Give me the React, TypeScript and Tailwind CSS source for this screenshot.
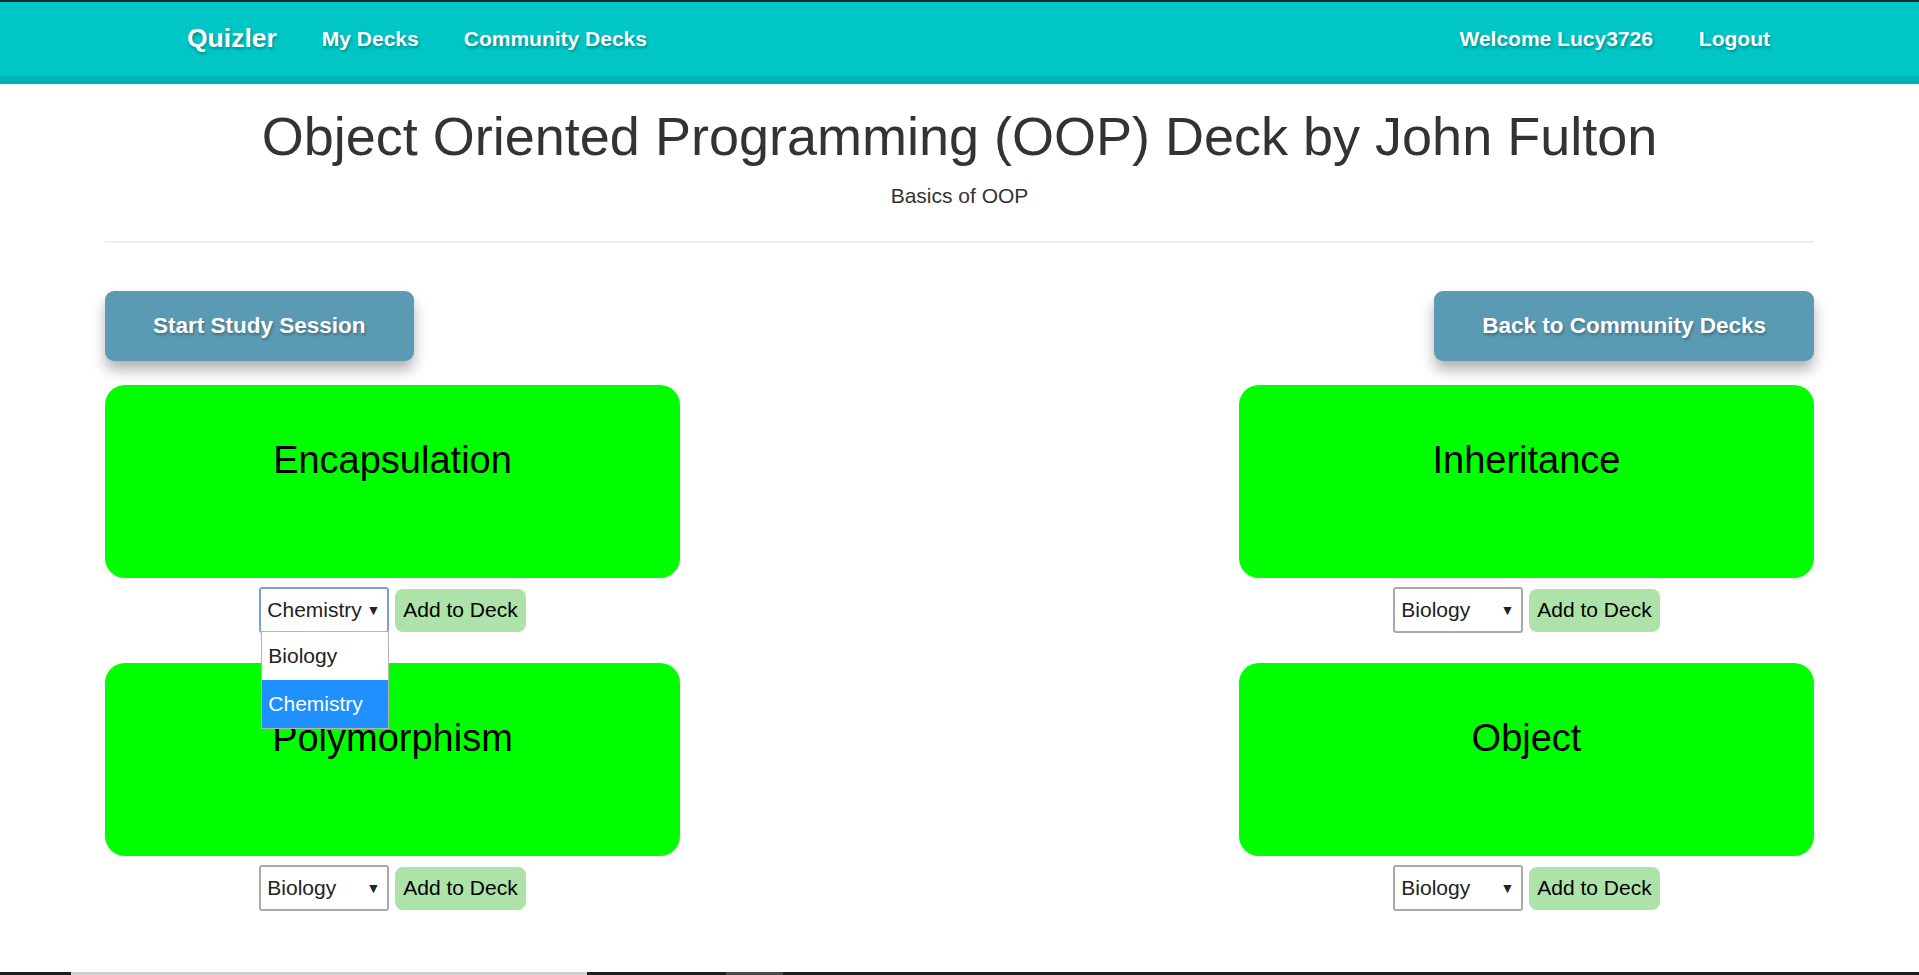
const cards = [
  { title: 'Encapsulation', deck: 'Chemistry', open: true },
  { title: 'Inheritance', deck: 'Biology', open: false },
  { title: 'Polymorphism', deck: 'Biology', open: false },
  { title: 'Object', deck: 'Biology', open: false },
];

function DeckSelect({ value, open }: { value: string; open: boolean }) {
  return (
    <div
      className={
        open
          ? 'relative flex items-center justify-between w-[130px] h-[46px] bg-white rounded-[3px] border-2 border-[#7f9fd8] pl-[6px] pr-[7px]'
          : 'relative flex items-center justify-between w-[130px] h-[46px] bg-white rounded-[3px] border-2 border-[#a9a9a9] pl-[6px] pr-[7px]'
      }
    >
      <span className="text-[21px] text-[#222]">{value}</span>
      <span className="text-[14px] text-[#222]">▼</span>
      {open && (
        <div className="absolute top-full left-0 right-[-2px] bg-white border border-[#b5b5b5] z-10">
          <div className="h-[48px] flex items-center px-[6px] text-[21px] text-[#222]">Biology</div>
          <div className="h-[48px] flex items-center px-[6px] text-[21px] text-white bg-[#1e90ff]">Chemistry</div>
        </div>
      )}
    </div>
  );
}

function Card({ title, deck, open }: { title: string; deck: string; open: boolean }) {
  return (
    <div className="w-[575px] flex flex-col items-center">
      <div className="w-full h-[193px] bg-[#00ff00] rounded-[20px] pt-[54px] text-center">
        <h2 className="text-[38px] leading-[1.15] text-black">{title}</h2>
      </div>
      <div className="flex items-center gap-[6px] mt-[9px]">
        <DeckSelect value={deck} open={open} />
        <button className="h-[43px] px-[8px] rounded-[8px] bg-[#ade3a8] text-[21px] text-black">Add to Deck</button>
      </div>
    </div>
  );
}

export default function App() {
  return (
    <div className="min-h-screen flex flex-col bg-white font-['Liberation_Sans',Arial,sans-serif]">
      <nav className="h-[84px] flex items-center justify-between bg-[#00c6c6] border-t-2 border-t-[#1c2c2e] border-b-8 border-b-[#00b4b4] pl-[187px] pr-[149px] text-white font-bold [text-shadow:1px_2px_3px_rgba(0,0,0,0.3)]">
        <div className="flex items-center gap-[45px]">
          <span className="text-[26.5px]">Quizler</span>
          <span className="text-[21px]">My Decks</span>
          <span className="text-[21px]">Community Decks</span>
        </div>
        <div className="flex items-center gap-[46px] text-[21px]">
          <span>Welcome Lucy3726</span>
          <span>Logout</span>
        </div>
      </nav>

      <div className="w-[1709px] mx-auto">
        <h1 className="mt-[21px] text-center text-[54px] leading-[1.15] text-[#333]">
          Object Oriented Programming (OOP) Deck by John Fulton
        </h1>
        <p className="mt-[17px] text-center text-[21px] leading-[1.1] text-[#333]">Basics of OOP</p>
        <hr className="mt-[34px] border-t-2 border-[#eeeeee]" />

        <div className="flex justify-between mt-[48px]">
          <button className="h-[70px] px-[48px] rounded-[9px] bg-[#5a9bb3] text-white font-bold text-[22.5px] shadow-[0_9px_14px_rgba(0,0,0,0.3)] [text-shadow:1px_2px_3px_rgba(0,0,0,0.3)]">
            Start Study Session
          </button>
          <button className="h-[70px] px-[48px] rounded-[9px] bg-[#5a9bb3] text-white font-bold text-[22.5px] shadow-[0_9px_14px_rgba(0,0,0,0.3)] [text-shadow:1px_2px_3px_rgba(0,0,0,0.3)]">
            Back to Community Decks
          </button>
        </div>

        <div className="grid grid-cols-[575px_575px] justify-between gap-y-[30px] mt-[24px]">
          {cards.map((c) => (
            <Card key={c.title} title={c.title} deck={c.deck} open={c.open} />
          ))}
        </div>
      </div>

      <div className="mt-auto h-[3px] flex">
        <div className="w-[71px] bg-[#1e1e1e]" />
        <div className="w-[516px] bg-[#cfcfcf]" />
        <div className="w-[139px] bg-[#1e1e1e]" />
        <div className="w-[57px] bg-[#4a4a4a]" />
        <div className="flex-1 bg-[#1e1e1e]" />
      </div>
    </div>
  );
}
